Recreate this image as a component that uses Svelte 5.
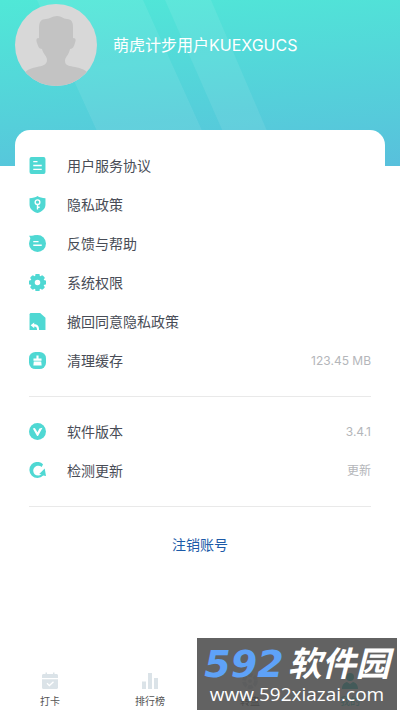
<script lang="ts">
  interface Item {
    icon: string;
    label: string;
    value?: string;
  }

  const user = '萌虎计步用户KUEXGUCS';

  const groups: Item[][] = [
    [
      { icon: 'doc', label: '用户服务协议' },
      { icon: 'shield', label: '隐私政策' },
      { icon: 'chat', label: '反馈与帮助' },
      { icon: 'gear', label: '系统权限' },
      { icon: 'revoke', label: '撤回同意隐私政策' },
      { icon: 'clean', label: '清理缓存', value: '123.45 MB' }
    ],
    [
      { icon: 'version', label: '软件版本', value: '3.4.1' },
      { icon: 'update', label: '检测更新', value: '更新' }
    ]
  ];

  const tabs = [
    { id: 'checkin', label: '打卡' },
    { id: 'rank', label: '排行榜' },
    { id: 'wheel', label: '转盘' },
    { id: 'mine', label: '我的' }
  ];

  let active = $state('mine');
</script>

{#snippet itemIcon(name: string)}
  <svg class="item__icon" viewBox="0 0 16 16" aria-hidden="true">
    {#if name === 'doc'}
      <rect x="0.5" y="0" width="15" height="16" rx="1.8" fill="currentColor" />
      <path d="M4 4.3h4M4 8h8M4 11.6h8" class="line" />
    {:else if name === 'shield'}
      <path d="M8 0C6.2 1.3 3.6 2 .5 2.1V8c0 4 3 6.7 7.5 8 4.5-1.3 7.5-4 7.5-8V2.1C12.4 2 9.8 1.3 8 0z" fill="currentColor" />
      <circle cx="8" cy="5.8" r="2.2" class="line" />
      <path d="M8 8v4.6M8 10.6h2" class="line" />
    {:else if name === 'chat'}
      <circle cx="8" cy="8" r="8" fill="currentColor" />
      <path d="M0 .6C2 .9 4 .5 8 0L1.400 5C1.500 3 1 1.600 0 .6z" fill="currentColor" />
      <path d="M4 6.2h5M4 9.6h8" class="line" />
    {:else if name === 'gear'}
      <circle cx="8" cy="8" r="4.6" fill="none" stroke="currentColor" stroke-width="4" />
      {#each [0, 45, 90, 135, 180, 225, 270, 315] as angle}
        <rect x="5.9" y="-0.2" width="4.2" height="3.4" rx="1.2" fill="currentColor" transform="rotate({angle} 8 8)" />
      {/each}
    {:else if name === 'revoke'}
      <path d="M2 0h8.5l5 4.5V16H.5V1.5C.5.6 1.1 0 2 0z" fill="currentColor" />
      <path d="M1.5 11.6l3.4-2.7v1.8c2.9 0 4.6 1.6 4.6 5.3H7.6c0-2.3-.9-3.3-2.7-3.3v1.7z" fill="#fff" />
    {:else if name === 'clean'}
      <rect x="0" y="0" width="16" height="16" rx="6" fill="currentColor" />
      <path d="M7 3.2h2v3h2.800v2H4.200v-2H7zM4.500 9h7l.4 3.700H4.100z" fill="#fff" />
    {:else if name === 'version'}
      <circle cx="8" cy="8" r="8" fill="currentColor" />
      <path d="M3.6 5.2l1.9-.6L8 8.700l1.800-3.500 2.900-.8L8.500 12.200H7.600z" fill="#fff" />
    {:else}
      <path
        d="M13.2 2A7.6 7.6 0 1 0 13.4 12.800L16 13.200 14.800 6 9.600 11.300l2.200.5C8.500 14 4.200 12.200 4 8.400 3.900 4.600 8.400 2.200 12 4.600z"
        fill="currentColor"
      />
    {/if}
  </svg>
{/snippet}

{#snippet tabIcon(name: string)}
  <svg class="tab__icon" viewBox="0 0 18 18" aria-hidden="true">
    {#if name === 'checkin'}
      <path d="M2.500 2h13C16.400 2 17 2.600 17 3.500V6H1V3.500C1 2.600 1.600 2 2.500 2zM4.500 .5h1.500V3H4.500zM12 .5h1.500V3H12zM1 7.200h16v8.300c0 .9-.6 1.500-1.500 1.500h-13C1.600 17 1 16.400 1 15.500z" fill="currentColor" />
      <path d="M6 11.200l2.400 2.400L12.500 9.800" class="line" />
    {:else if name === 'rank'}
      <path d="M1 9.500h4V17H1zM7 1h4v16H7zM13 6h4v11h-4z" fill="currentColor" />
    {:else if name === 'wheel'}
      <circle cx="9" cy="9" r="6" fill="none" stroke="currentColor" stroke-width="4" stroke-dasharray="5 1.300" />
      <circle cx="9" cy="9" r="2" fill="currentColor" />
    {:else}
      <circle cx="9" cy="5" r="4" fill="currentColor" />
      <path d="M1 17c0-4.500 2.500-6.500 5-7l3 2 3-2c2.500.5 5 2.500 5 7z" fill="currentColor" />
    {/if}
  </svg>
{/snippet}

<div class="page">
  <header class="hero">
    <svg class="hero__rays" viewBox="0 0 400 166" preserveAspectRatio="none" aria-hidden="true">
      <path d="M37 0h106l75 166H113z" />
      <path d="M165 0h46l71 166h-44z" />
    </svg>
    <svg class="avatar" viewBox="0 0 82 82" role="img" aria-label="头像">
      <clipPath id="avatar-clip"><circle cx="41" cy="41" r="41" /></clipPath>
      <g clip-path="url(#avatar-clip)">
        <rect width="82" height="82" fill="#d8d8d8" />
        <path
          d="M24 34V24c0-6 2-9 7-9 4 0 6-3 11-3 5 0 6 3 10 3 5 0 6 4 6 8v11c3 0 3 2 2 5s-2 6-5 6c-1 6-5 8-5 12 0 5 5 5 10 6 6 1 11 3 15 8v15H8V71c3-5 8-7 14-8 5-1 10-2 10-7 0-4-4-6-5-11-3 0-4-3-5-6s-1-5 2-5z"
          fill="#c3c3c3"
        />
      </g>
    </svg>
    <h1 class="hero__name">{user}</h1>
  </header>

  <main class="card">
    {#each groups as group}
      <ul class="group">
        {#each group as item}
          <li>
            <button class="item" type="button">
              {@render itemIcon(item.icon)}
              <span class="item__label">{item.label}</span>
              {#if item.value}
                <span class="item__value">{item.value}</span>
              {/if}
            </button>
          </li>
        {/each}
      </ul>
    {/each}
    <a class="cancel" href="#cancel">注销账号</a>
  </main>

  <nav class="tabs">
    {#each tabs as tab}
      <button
        class="tab"
        class:tab--active={active === tab.id}
        type="button"
        onclick={() => (active = tab.id)}
      >
        {@render tabIcon(tab.id)}
        <span class="tab__label">{tab.label}</span>
      </button>
    {/each}
  </nav>

  <div class="watermark">
    <div class="watermark__brand"><span class="watermark__num">592</span>软件园</div>
    <div class="watermark__site">www.592xiazai.com</div>
  </div>
</div>

<style>
  :global(body) {
    background: #fff;
  }

  .page {
    position: relative;
    display: flex;
    flex-direction: column;
    min-height: 100vh;
    overflow: hidden;
    font-family: Inter, 'Noto Sans CJK SC', sans-serif;
    color: #484c56;
  }

  button {
    padding: 0;
    border: 0;
    background: none;
    font: inherit;
    color: inherit;
    cursor: pointer;
  }

  .hero {
    position: relative;
    display: flex;
    align-items: flex-start;
    gap: 16px;
    box-sizing: border-box;
    height: 166px;
    padding: 4px 15px 0;
    background: linear-gradient(175deg, #50e8d7, #58c0dc);
  }

  .hero__rays {
    position: absolute;
    inset: 0;
    width: 100%;
    height: 100%;
    fill: rgb(255 255 255 / 0.08);
  }

  .avatar {
    position: relative;
    flex: none;
    width: 82px;
    height: 82px;
  }

  .hero__name {
    position: relative;
    margin: 0;
    font-size: 16px;
    font-weight: 400;
    line-height: 82px;
    color: #fff;
  }

  .card {
    position: relative;
    display: flex;
    flex-direction: column;
    flex: 1;
    margin: -36px 15px 0;
    padding: 16px 14px 0;
    border-radius: 15px 15px 0 0;
    background: #fff;
  }

  .group {
    margin: 0 0 15px;
    padding: 0 0 16px;
    border-bottom: 1px solid #e9e9e9;
    list-style: none;
  }

  .item {
    display: flex;
    align-items: center;
    width: 100%;
    height: 39px;
    text-align: left;
  }

  .item__icon {
    flex: none;
    width: 17px;
    height: 17px;
    margin-right: 21px;
    color: #4fd8d3;
  }

  .line {
    fill: none;
    stroke: #fff;
    stroke-width: 1.3;
  }

  .item__label {
    flex: 1;
    font-size: 14px;
    line-height: 20px;
  }

  .item__value {
    font-size: 12px;
    line-height: 20px;
    color: #b4b6ba;
  }

  .cancel {
    align-self: center;
    font-size: 14px;
    line-height: 46px;
    color: #1c5aa8;
    text-decoration: none;
  }

  .tabs {
    display: flex;
    padding-bottom: 2px;
  }

  .tab {
    display: flex;
    flex: 1;
    flex-direction: column;
    align-items: center;
    gap: 3px;
  }

  .tab__icon {
    width: 18px;
    height: 18px;
    color: #dbe3e8;
  }

  .tab__label {
    font-size: 10px;
    line-height: 16px;
    color: #555;
  }

  .tab--active .tab__icon,
  .tab--active .tab__label {
    color: #23c4bd;
  }

  .watermark {
    position: absolute;
    right: 3px;
    bottom: 1px;
    box-sizing: border-box;
    width: 200px;
    height: 72px;
    padding-top: 8px;
    background: rgb(72 72 72 / 0.86);
    color: #fff;
    text-align: center;
    pointer-events: none;
  }

  .watermark__brand {
    display: flex;
    align-items: center;
    justify-content: center;
    gap: 4px;
    font-size: 34px;
    font-style: italic;
    font-weight: 700;
    line-height: 36px;
    white-space: nowrap;
  }

  .watermark__num {
    font-family: 'DejaVu Sans', sans-serif;
    font-size: 38px;
    color: #5ea2f8;
  }

  .watermark__site {
    font-family: 'Open Sans', sans-serif;
    font-size: 19px;
    line-height: 24px;
  }
</style>
